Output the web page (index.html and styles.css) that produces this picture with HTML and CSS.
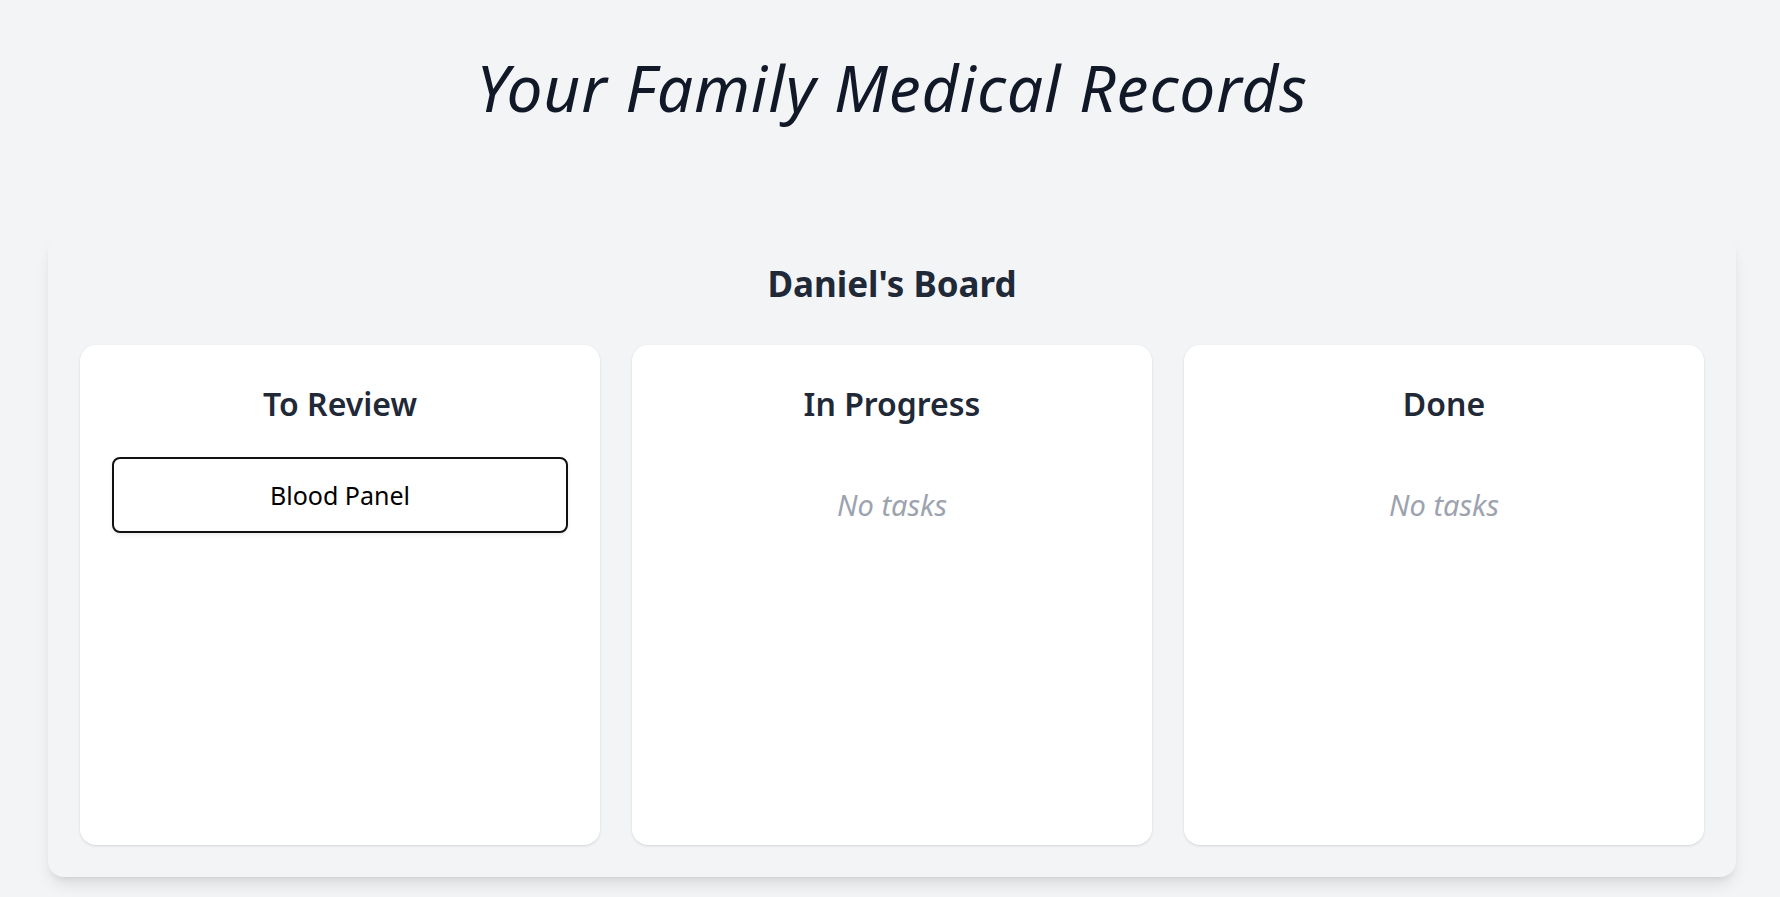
FILE: index.html
```html
<!DOCTYPE html>
<html lang="en">
<head>
<meta charset="utf-8">
<title>Your Family Medical Records</title>
<link rel="stylesheet" href="styles.css">
</head>
<body>
<main class="page">
  <h1 class="page-title">Your Family Medical Records</h1>
  <section class="board">
    <h2 class="board-title">Daniel's Board</h2>
    <div class="columns">
      <div class="column">
        <h3 class="column-title">To Review</h3>
        <div class="task">Blood Panel</div>
      </div>
      <div class="column">
        <h3 class="column-title">In Progress</h3>
        <p class="empty">No tasks</p>
      </div>
      <div class="column">
        <h3 class="column-title">Done</h3>
        <p class="empty">No tasks</p>
      </div>
    </div>
  </section>
</main>
</body>
</html>
```

FILE: styles.css
```css
* { box-sizing: border-box; }

html, body {
  margin: 0;
  padding: 0;
  background: #f3f4f6;
}

body {
  font-family: "Noto Sans", "Open Sans", "Liberation Sans", sans-serif;
  color: #1f2937;
}

.page {
  padding: 0 44px 20px 48px;
}

.page-title {
  margin: 50px 0 0;
  text-align: center;
  font-size: 64px;
  line-height: 76.8px;
  font-weight: 400;
  font-style: italic;
  color: #111827;
  letter-spacing: 0.9px;
}

.board {
  margin-top: 108px;
  background: #f3f4f6;
  border-radius: 16px;
  box-shadow: 0 10px 15px -3px rgba(0,0,0,0.1), 0 4px 6px -4px rgba(0,0,0,0.1);
  padding: 27px 32px 32px;
}

.board-title {
  margin: 0;
  text-align: center;
  font-size: 35px;
  line-height: 43px;
  font-weight: 700;
  color: #1f2937;
}

.columns {
  margin-top: 40px;
  display: grid;
  grid-template-columns: repeat(3, 1fr);
  gap: 32px;
}

.column {
  background: #fff;
  border-radius: 16px;
  box-shadow: 0 1px 3px 0 rgba(0,0,0,0.1), 0 1px 2px -1px rgba(0,0,0,0.1);
  min-height: 500px;
  padding: 40px 32px 32px;
  display: flex;
  flex-direction: column;
}

.column-title {
  margin: 0;
  text-align: center;
  font-size: 32px;
  line-height: 37px;
  font-weight: 600;
  color: #1f2937;
}

.task {
  margin-top: 35px;
  border: 2px solid #111;
  border-radius: 8px;
  padding: 21px 16px;
  text-align: center;
  font-size: 25px;
  line-height: 30px;
  color: #000;
  background: #fff;
  box-shadow: 0 2px 4px rgba(0,0,0,0.08);
}

.empty {
  margin: 66px 0 0;
  text-align: center;
  font-size: 29px;
  line-height: 33px;
  font-style: italic;
  color: #9ca3af;
}
```
